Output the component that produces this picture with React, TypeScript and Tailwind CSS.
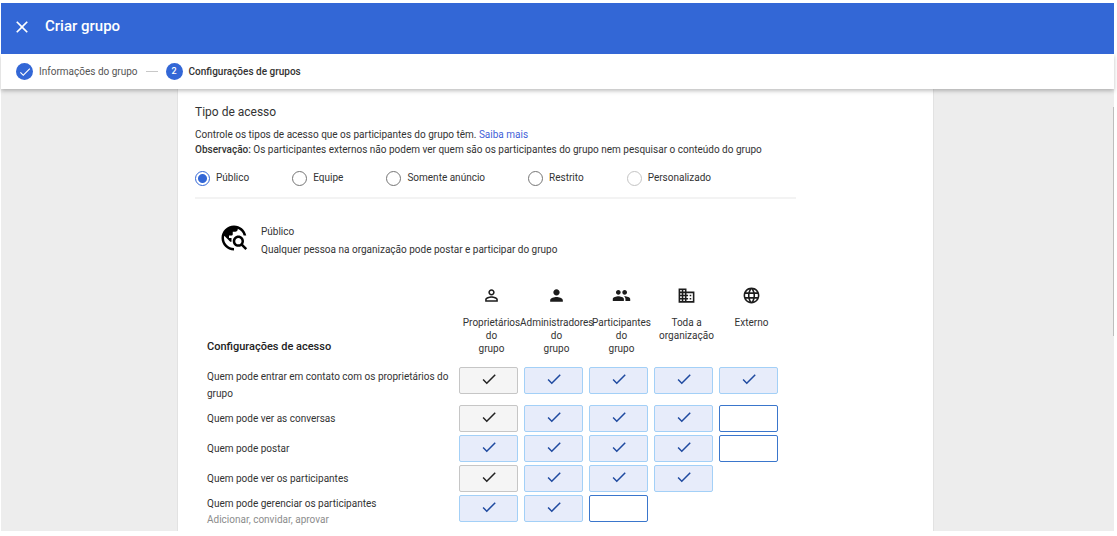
import { useState } from "react";
import type { IconType } from "react-icons";
import {
  MdCheck,
  MdClose,
  MdDomain,
  MdLanguage,
  MdPeople,
  MdPerson,
  MdPersonOutline,
  MdTravelExplore,
} from "react-icons/md";

type Cell = "locked" | "on" | "off";

const accessTypes = [
  { name: "Público" },
  { name: "Equipe" },
  { name: "Somente anúncio" },
  { name: "Restrito" },
  { name: "Personalizado", disabled: true },
];

const audiences: { icon: IconType; lines: string[] }[] = [
  { icon: MdPersonOutline, lines: ["Proprietários", "do", "grupo"] },
  { icon: MdPerson, lines: ["Administradores", "do", "grupo"] },
  { icon: MdPeople, lines: ["Participantes", "do", "grupo"] },
  { icon: MdDomain, lines: ["Toda a", "organização"] },
  { icon: MdLanguage, lines: ["Externo"] },
];

const initialRows: { label: string; note?: string; tall?: boolean; cells: Cell[] }[] = [
  {
    label: "Quem pode entrar em contato com os proprietários do grupo",
    tall: true,
    cells: ["locked", "on", "on", "on", "on"],
  },
  { label: "Quem pode ver as conversas", cells: ["locked", "on", "on", "on", "off"] },
  { label: "Quem pode postar", cells: ["on", "on", "on", "on", "off"] },
  { label: "Quem pode ver os participantes", cells: ["locked", "on", "on", "on"] },
  {
    label: "Quem pode gerenciar os participantes",
    note: "Adicionar, convidar, aprovar",
    cells: ["on", "on", "off"],
  },
];

function PermissionBox({ state, label, onToggle }: { state: Cell; label: string; onToggle: () => void }) {
  return (
    <div className="grid w-[59px]">
      <input
        type="checkbox"
        aria-label={label}
        checked={state !== "off"}
        disabled={state === "locked"}
        onChange={onToggle}
        className="col-start-1 row-start-1 h-[27px] w-full appearance-none rounded-xs border border-solid border-[#3a76cc] bg-white checked:border-[#a3d0f7] checked:bg-[#e7ecfa] disabled:border-[#c6c6c6] disabled:bg-[#f5f5f5]"
      />
      {state !== "off" && (
        <MdCheck
          aria-hidden
          className={`pointer-events-none col-start-1 row-start-1 mt-[3px] size-[18px] justify-self-center ${
            state === "locked" ? "text-[#222]" : "text-[#1f4aa0]"
          }`}
        />
      )}
    </div>
  );
}

export default function App() {
  const [access, setAccess] = useState("Público");
  const [rows, setRows] = useState(initialRows);

  const toggle = (r: number, c: number) =>
    setRows((all) =>
      all.map((row, i) =>
        i === r
          ? { ...row, cells: row.cells.map((s, j) => (j === c ? (s === "on" ? "off" : "on") : s)) }
          : row,
      ),
    );

  return (
    <div className="flex h-screen flex-col bg-white pt-[3px] pr-[3px] pb-[5px] pl-px font-['Roboto',sans-serif] text-[10px] text-[#333]">
      <header className="relative z-20 flex shrink-0 items-center gap-[13px] bg-[#3367d6] px-[11px] pt-3 pb-4 text-white">
        <button type="button" aria-label="Fechar" className="grid place-items-center">
          <MdClose className="size-5" />
        </button>
        <h1 className="text-[15px] leading-[23px] font-medium">Criar grupo</h1>
      </header>

      <nav
        aria-label="Etapas"
        className="relative z-10 flex shrink-0 items-center bg-white px-[15px] py-[9px] leading-[17px] shadow-[0_2px_4px_rgba(0,0,0,0.25)]"
      >
        <span className="grid size-[17px] place-items-center rounded-full bg-[#3367d6] text-white">
          <MdCheck className="size-[14px]" />
        </span>
        <span className="ml-[6px] text-[#555]">Informações do grupo</span>
        <span className="mx-2 h-px w-3 bg-[#c8c8c8]" />
        <span className="grid size-[17px] place-items-center rounded-full bg-[#3367d6] text-[9px] font-medium text-white">
          2
        </span>
        <span className="ml-[6px] font-medium">Configurações de grupos</span>
      </nav>

      <main className="relative min-h-0 flex-1 overflow-hidden bg-[#ededed] pr-1">
        <div className="absolute top-[18px] right-0 h-[229px] w-px bg-[#bdbdbd]" />
        <section className="mx-auto min-h-full w-full max-w-[757px] border-x border-[#e2e2e2] bg-white px-[17px] pt-[15px]">
          <div className="max-w-[601px] border-b-2 border-[#f3f3f3] pb-[11px]">
            <h2 className="text-[12px] leading-4">Tipo de acesso</h2>
            <p className="mt-[7px] leading-[15px] whitespace-nowrap">
              Controle os tipos de acesso que os participantes do grupo têm.{" "}
              <a href="#saiba-mais" className="text-[#3f5fd8]">
                Saiba mais
              </a>
              <br />
              <b className="font-medium">Observação:</b> Os participantes externos não podem ver quem são os participantes
              do grupo nem pesquisar o conteúdo do grupo
            </p>
            <div role="radiogroup" aria-label="Tipo de acesso" className="mt-[13px] flex gap-[43px]">
              {accessTypes.map(({ name, disabled }) => (
                <label key={name} className="flex items-center gap-[6px] leading-4">
                  <input
                    type="radio"
                    name="access"
                    checked={access === name}
                    disabled={disabled}
                    onChange={() => setAccess(name)}
                    className="size-[15px] appearance-none rounded-full border border-[#757575] bg-white checked:border-[#3367d6] checked:bg-[radial-gradient(circle,#3367d6_4px,transparent_5px)] disabled:border-[#c4c4c4]"
                  />
                  {name}
                </label>
              ))}
            </div>
          </div>

          <div className="mt-6 flex items-start gap-3 pl-6">
            <MdTravelExplore className="size-[30px] text-black" />
            <p className="leading-[18px]">
              Público
              <br />
              Qualquer pessoa na organização pode postar e participar do grupo
            </p>
          </div>

          <table className="mt-[27px] ml-3 w-[577px] table-fixed border-collapse">
            <thead>
              <tr className="h-[81px] align-top">
                <th scope="col" className="w-[252px] pt-[53px] text-left text-[11px] leading-4 font-medium text-[#222]">
                  Configurações de acesso
                </th>
                {audiences.map(({ icon: Icon, lines }) => (
                  <th key={lines[0]} scope="col" className="text-center leading-[13px] font-normal">
                    <Icon className="mx-auto mb-[11px] size-[19px] text-[#1c1c1c]" />
                    {lines.map((line) => (
                      <span key={line} className="-mx-1 block text-center whitespace-nowrap">
                        {line}
                      </span>
                    ))}
                  </th>
                ))}
              </tr>
            </thead>
            <tbody>
              {rows.map((row, r) => (
                <tr key={row.label} className={`align-top ${row.tall ? "h-[38px]" : "h-[30px]"}`}>
                  <th
                    scope="row"
                    className={`text-left font-normal ${
                      row.note ? "pt-px leading-4" : row.tall ? "pt-px leading-[17px]" : "pt-[5px] leading-[17px]"
                    }`}
                  >
                    {row.label}
                    {row.note && <span className="block text-[#8c8c8c]">{row.note}</span>}
                  </th>
                  {audiences.map(({ lines }, c) => (
                    <td key={lines[0]}>
                      {row.cells[c] && (
                        <PermissionBox
                          state={row.cells[c]}
                          label={`${row.label}: ${lines.join(" ")}`}
                          onToggle={() => toggle(r, c)}
                        />
                      )}
                    </td>
                  ))}
                </tr>
              ))}
            </tbody>
          </table>
        </section>
      </main>
    </div>
  );
}
